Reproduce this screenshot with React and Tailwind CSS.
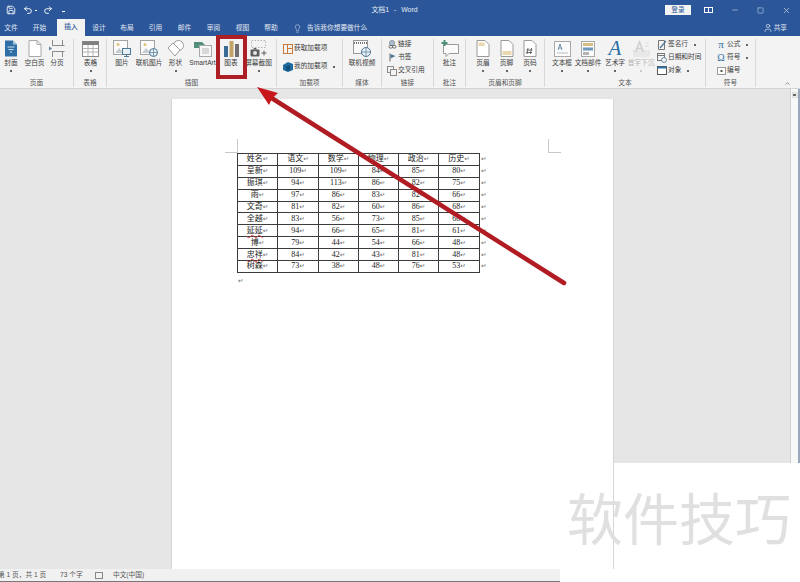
import { User, Lightbulb, Save, Undo2, Redo2, Minus, Square, X, ChevronUp } from "lucide-react";

const TABS = [
  ["文件", 22],
  ["开始", 35],
  ["插入", 28],
  ["设计", 28],
  ["布局", 28],
  ["引用", 29],
  ["邮件", 29],
  ["审阅", 29],
  ["视图", 29],
  ["帮助", 28],
];

const SCORES = [
  ["姓名", "语文", "数学", "物理", "政治", "历史"],
  ["呈新", "109", "109", "84", "85", "80"],
  ["振琪", "94", "113", "86", "82", "75"],
  ["雨", "97", "86", "83", "82", "66"],
  ["文奇", "81", "82", "60", "86", "68"],
  ["全越", "83", "56", "73", "85", "68"],
  ["延延", "94", "66", "65", "81", "61"],
  ["博", "79", "44", "54", "66", "48"],
  ["忠祥", "84", "42", "43", "81", "48"],
  ["树森", "73", "38", "48", "76", "53"],
];

const MISSPELLED = ["延延", "忠祥"];

function Glyph({ w = 20, h = 18, children }) {
  return (
    <svg width={w} height={h} viewBox={`0 0 ${w} ${h}`} fill="none">
      {children}
    </svg>
  );
}

const CoverIcon = () => (
  <Glyph w={14} h={17}>
    <path d="M1 0.5h8l4 4v12H1z" fill="#2f6fa6" />
    <path d="M9 0.5l4 4H9z" fill="#a9c6de" />
    <path d="M3.5 7h7M4.5 9.5h5M6 12h2" stroke="#cfe0ee" />
  </Glyph>
);

const BlankIcon = () => (
  <Glyph w={14} h={17}>
    <path d="M1 0.5h8l4 4v12H1z" fill="#fff" stroke="#a8a8a8" />
    <path d="M9 0.5v4h4" stroke="#a8a8a8" />
  </Glyph>
);

const BreakIcon = () => (
  <Glyph w={16} h={17}>
    <path d="M3.5 0v5.5h12M3.5 17v-5.5h12" stroke="#8a8a8a" />
    <path d="M13.5 0v5M13.5 17v-5" stroke="#8a8a8a" />
    <path d="M0 6.5l3 2-3 2z" fill="#5c7f9f" />
  </Glyph>
);

const TableIcon = () => (
  <Glyph w={17} h={16}>
    <rect x="0.5" y="0.5" width="16" height="15" fill="#fff" stroke="#8c8c8c" />
    <rect x="0.5" y="0.5" width="16" height="3.5" fill="#7f7f7f" />
    <path d="M6 4v11M11 4v11M1 7.5h15M1 11h15" stroke="#b5b5b5" />
  </Glyph>
);

const PictureIcon = ({ badge }) => (
  <Glyph w={18} h={17}>
    <rect x="0.5" y="0.5" width="14" height="14" fill="#fbfbfb" stroke="#a3a3a3" />
    <path d="M2 13l4-5 3 3 2-2 3 4z" fill="#c8cdd2" />
    <circle cx="5" cy="4.5" r="1.5" fill="#e2c27c" />
    {badge === "monitor" ? (
      <>
        <rect x="9.5" y="8.5" width="8" height="6" fill="#e8f0f6" stroke="#4f7897" />
        <path d="M11 16.5h5M13.5 14.5v2" stroke="#4f7897" />
      </>
    ) : (
      <>
        <circle cx="13.5" cy="12.5" r="4" fill="#e8f0f6" stroke="#4f7897" />
        <path d="M9.5 12.5h8M13.5 8.5v8" stroke="#4f7897" strokeWidth="0.7" />
      </>
    )}
  </Glyph>
);

const ShapesIcon = () => (
  <Glyph w={17} h={17}>
    <circle cx="11.5" cy="5.5" r="5" fill="#fff" stroke="#9a9a9a" />
    <path d="M1 8l5-5 7 7-5 6z" fill="#fff" stroke="#9a9a9a" />
  </Glyph>
);

const SmartArtIcon = () => (
  <Glyph w={18} h={16}>
    <path d="M0 1h8l3 3-3 3H0z" fill="#4f8f7b" />
    <rect x="5.5" y="4.5" width="12" height="11" fill="#f7f7f7" stroke="#a8a8a8" />
    <rect x="8" y="7" width="7" height="6" fill="#d8d8d8" />
  </Glyph>
);

const ChartIcon = () => (
  <Glyph w={15} h={16}>
    <rect x="0" y="5" width="4" height="11" fill="#3b6a94" />
    <rect x="5.5" y="0" width="4" height="16" fill="#c2a566" />
    <rect x="11" y="3" width="4" height="13" fill="#6f6f6f" />
  </Glyph>
);

const ScreenshotIcon = () => (
  <Glyph w={17} h={17}>
    <rect x="1.5" y="0.5" width="14" height="7" stroke="#b5b5b5" strokeDasharray="1.5 1.5" />
    <rect x="0.5" y="9.5" width="9" height="7" rx="1" fill="#5f5f5f" />
    <path d="M3 9.5l1-1.5h2l1 1.5z" fill="#5f5f5f" />
    <circle cx="5" cy="13" r="2" fill="#e6e6e6" />
    <path d="M11.5 13h5M14 10.5v5" stroke="#5f5f5f" />
  </Glyph>
);

const StoreIcon = () => (
  <Glyph w={10} h={10}>
    <rect x="0.5" y="0.5" width="4" height="9" stroke="#c77a3c" />
    <rect x="4.5" y="0.5" width="5" height="4" stroke="#c77a3c" />
    <rect x="4.5" y="4.5" width="5" height="5" stroke="#c77a3c" />
  </Glyph>
);

const MyAddinIcon = () => (
  <Glyph w={10} h={10}>
    <path d="M0 3l5-3 5 2v6l-5 2-5-2z" fill="#1f6b9f" />
    <path d="M3 4l4-1v5l-4 1z" fill="#0f4f7b" />
  </Glyph>
);

const VideoIcon = () => (
  <Glyph w={18} h={17}>
    <rect x="0.5" y="0.5" width="14" height="13" fill="#fafafa" stroke="#999" />
    <path d="M1 3h13" stroke="#777" strokeDasharray="1 1" strokeWidth="2" />
    <circle cx="13" cy="12" r="4.5" fill="#e8f0f6" stroke="#4f7897" />
    <path d="M8.5 12h9M13 7.5v9" stroke="#4f7897" strokeWidth="0.7" />
  </Glyph>
);

const LinkIcon = () => (
  <Glyph w={9} h={9}>
    <circle cx="4" cy="3" r="2.6" fill="#a7bfd4" stroke="#7f7f7f" strokeWidth="0.7" />
    <rect x="1" y="5.5" width="3.5" height="2.5" rx="1" stroke="#555" strokeWidth="0.8" />
    <rect x="4.5" y="5.5" width="3.5" height="2.5" rx="1" stroke="#555" strokeWidth="0.8" />
  </Glyph>
);

const FlagIcon = () => (
  <Glyph w={9} h={9}>
    <path d="M2 0.5v8" stroke="#666" />
    <path d="M2.5 1l5 2-5 2.5z" fill="#4f7897" />
  </Glyph>
);

const CrossRefIcon = () => (
  <Glyph w={10} h={10}>
    <rect x="0.5" y="0.5" width="6" height="6" stroke="#8a8a8a" />
    <rect x="3.5" y="3.5" width="6" height="6" fill="#f3f3f3" stroke="#8a8a8a" />
  </Glyph>
);

const CommentIcon = () => (
  <Glyph w={18} h={17}>
    <path d="M2.5 4.5h15v9H8l-3 3v-3H2.5z" fill="#fafafa" stroke="#9a9a9a" />
    <path d="M3.5 0v6M0.5 3h6" stroke="#4f8f7b" strokeWidth="2" />
  </Glyph>
);

const HeaderIcon = ({ kind }) => (
  <Glyph w={14} h={17}>
    <path d="M1 0.5h8l4 4v12H1z" fill="#fff" stroke="#9a9a9a" />
    {kind === "header" && <rect x="2.5" y="2.5" width="6" height="3.5" fill="#ead9ac" />}
    {kind === "footer" && <rect x="2.5" y="11" width="9" height="4" fill="#ead9ac" />}
    {kind === "number" && <path d="M5 8l-1 6M8.5 8l-1 6M3.5 10h6M3 12.5h6" stroke="#666" />}
  </Glyph>
);

const TextBoxIcon = () => (
  <Glyph w={17} h={16}>
    <rect x="0.5" y="0.5" width="16" height="15" fill="#fbfbfb" stroke="#a8a8a8" />
    <path d="M4 9l2-6 2 6M4.7 7h2.6" stroke="#4f7897" strokeWidth="0.8" />
    <path d="M3 12h11" stroke="#bdbdbd" />
  </Glyph>
);

const QuickPartsIcon = () => (
  <Glyph w={14} h={16}>
    <rect x="0.5" y="0.5" width="13" height="15" fill="#fbfbfb" stroke="#a8a8a8" />
    <rect x="2" y="2" width="10" height="3" fill="#d5bd83" />
    <rect x="2" y="6.5" width="10" height="3" fill="#6f9aba" />
    <rect x="2" y="11" width="6" height="3" fill="#b4b4b4" />
  </Glyph>
);

const DropCapIcon = () => (
  <Glyph w={17} h={17}>
    <rect x="0" y="10" width="17" height="7" fill="#e8e8e8" />
    <path d="M2.5 12l4-10 4 10M4.2 8.5h4.6" stroke="#cfcfcf" strokeWidth="1.6" />
    <path d="M12 3h4M12 6h4" stroke="#dcdcdc" />
  </Glyph>
);

const SignatureIcon = () => (
  <Glyph w={9} h={10}>
    <path d="M0.5 0.5h6v9h-6z" stroke="#777" />
    <path d="M2 8l6-7" stroke="#4f7897" strokeWidth="1.2" />
  </Glyph>
);

const DateIcon = () => (
  <Glyph w={10} h={10}>
    <rect x="0.5" y="0.5" width="7" height="7" stroke="#777" />
    <path d="M0.5 2.5h7" stroke="#777" />
    <circle cx="7" cy="7" r="2.5" fill="#f3f3f3" stroke="#4f7897" strokeWidth="0.8" />
  </Glyph>
);

const ObjectIcon = () => (
  <Glyph w={10} h={9}>
    <rect x="0.5" y="0.5" width="9" height="8" fill="#fff" stroke="#555" />
    <path d="M0.5 1.5h9" stroke="#2f6fa6" strokeWidth="2" />
  </Glyph>
);

const NumberIcon = () => (
  <Glyph w={9} h={8}>
    <rect x="0.5" y="0.5" width="8" height="7" fill="#fff" stroke="#9a9a9a" />
    <rect x="3.5" y="3" width="2" height="2" fill="#555" />
  </Glyph>
);

function Dot({ faint }) {
  return <span className={`block w-[2px] h-[2px] ${faint ? "bg-[#c8c8c8]" : "bg-[#666]"}`} />;
}

function LargeButton({ width, label, dropdown, disabled, children }) {
  return (
    <div className="flex flex-col items-center shrink-0" style={{ width }}>
      <div className="h-[17px] mt-[1px] flex items-center justify-center">{children}</div>
      <span
        className={`mt-[1px] h-[10px] leading-[10px] whitespace-nowrap ${disabled ? "text-[#b4b4b4]" : "text-[#3c3c3c]"}`}
      >
        {label}
      </span>
      {dropdown && (
        <span className="mt-[2px]">
          <Dot faint={disabled} />
        </span>
      )}
    </div>
  );
}

function SmallButton({ icon, label, dropdown }) {
  return (
    <div className="flex items-center h-[13px] whitespace-nowrap text-[#3c3c3c]">
      <span className="w-[10px] flex justify-center shrink-0">{icon}</span>
      <span className="ml-[1px]">{label}</span>
      {dropdown && (
        <span className="ml-[6px]">
          <Dot />
        </span>
      )}
    </div>
  );
}

function RibbonGroup({ width, title, pad = 0, children }) {
  return (
    <div
      className="flex flex-col shrink-0 border-r border-[#d8d8d8] h-[48px] mt-[3px]"
      style={{ width, paddingLeft: pad }}
    >
      <div className="flex-1 flex items-start min-h-0">{children}</div>
      <div className="h-[10px] leading-[12px] text-center text-[#555]" style={{ marginLeft: -pad }}>
        {title}
      </div>
    </div>
  );
}

function TitleBar() {
  return (
    <div className="h-[20px] bg-[#2b579a] flex items-center text-white">
      <div className="flex items-center w-[70px] pl-[6px]">
        <Save size={10} strokeWidth={2} />
        <Undo2 size={10} strokeWidth={2.2} className="ml-[7px]" />
        <span className="w-[2px] h-[1px] bg-white ml-[2px]" />
        <Redo2 size={10} strokeWidth={2.2} className="ml-[6px]" />
        <span className="w-[3px] h-[3px] border-b border-white ml-[9px]" />
      </div>
      <div className="w-[595px] text-center text-[6.9px] text-[#e6ecf5] pl-[54px] [word-spacing:3px]">文档1 - Word</div>
      <span className="w-[26px] h-[10px] bg-[#f4f4f4] text-[#2b579a] text-[6.7px] leading-[10px] text-center">登录</span>
      <span className="w-[9px] h-[6px] border border-white ml-[13px] flex justify-center">
        <span className="w-[1px] h-full bg-white" />
      </span>
      <Minus size={8} className="ml-[18px]" strokeWidth={1.4} />
      <Square size={7} className="ml-[18px]" strokeWidth={1.4} />
      <X size={9} className="ml-[18px]" strokeWidth={1.4} />
    </div>
  );
}

function TabRow() {
  return (
    <div className="h-[16px] bg-[#2b579a] flex items-stretch text-[6.7px] text-[#e2e8f2]">
      {TABS.map(([name, width]) => (
        <div
          key={name}
          style={{ width }}
          className={`flex items-center justify-center ${
            name === "插入" ? "bg-[#f3f3f3] text-[#2b579a] font-medium mt-[-1px]" : ""
          }`}
        >
          {name}
        </div>
      ))}
      <div className="flex items-center ml-[8px]">
        <Lightbulb size={9} strokeWidth={1.4} />
        <span className="ml-[5px]">告诉我你想要做什么</span>
      </div>
      <div className="flex items-center ml-auto mr-[13px]">
        <User size={10} strokeWidth={1.6} />
        <span className="ml-[1px]">共享</span>
      </div>
    </div>
  );
}

function Ribbon() {
  return (
    <div className="h-[53px] bg-[#f3f3f3] border-b border-[#d4d4d4] flex items-start text-[6.7px] relative">
      <RibbonGroup width={74} title="页面">
        <LargeButton width={22} label="封面" dropdown><CoverIcon /></LargeButton>
        <LargeButton width={25} label="空白页"><BlankIcon /></LargeButton>
        <LargeButton width={20} label="分页"><BreakIcon /></LargeButton>
      </RibbonGroup>
      <RibbonGroup width={33} title="表格" pad={1}>
        <LargeButton width={31} label="表格" dropdown><TableIcon /></LargeButton>
      </RibbonGroup>
      <RibbonGroup width={170} title="插图" pad={1}>
        <LargeButton width={28} label="图片"><PictureIcon badge="monitor" /></LargeButton>
        <LargeButton width={26} label="联机图片"><PictureIcon badge="globe" /></LargeButton>
        <LargeButton width={27} label="形状" dropdown><ShapesIcon /></LargeButton>
        <LargeButton width={27} label="SmartArt"><SmartArtIcon /></LargeButton>
        <LargeButton width={30} label="图表"><ChartIcon /></LargeButton>
        <LargeButton width={25} label="屏幕截图" dropdown><ScreenshotIcon /></LargeButton>
      </RibbonGroup>
      <RibbonGroup width={66} title="加载项" pad={6}>
        <div className="flex flex-col pt-[3px] gap-[5px]">
          <SmallButton icon={<StoreIcon />} label="获取加载项" />
          <SmallButton icon={<MyAddinIcon />} label="我的加载项" dropdown />
        </div>
      </RibbonGroup>
      <RibbonGroup width={39} title="媒体">
        <LargeButton width={38} label="联机视频"><VideoIcon /></LargeButton>
      </RibbonGroup>
      <RibbonGroup width={52} title="链接" pad={5}>
        <div className="flex flex-col mt-[-1px]">
          <SmallButton icon={<LinkIcon />} label="链接" />
          <SmallButton icon={<FlagIcon />} label="书签" />
          <SmallButton icon={<CrossRefIcon />} label="交叉引用" />
        </div>
      </RibbonGroup>
      <RibbonGroup width={32} title="批注">
        <LargeButton width={31} label="批注"><CommentIcon /></LargeButton>
      </RibbonGroup>
      <RibbonGroup width={79} title="页眉和页脚" pad={5}>
        <LargeButton width={24} label="页眉" dropdown><HeaderIcon kind="header" /></LargeButton>
        <LargeButton width={23} label="页脚" dropdown><HeaderIcon kind="footer" /></LargeButton>
        <LargeButton width={24} label="页码" dropdown><HeaderIcon kind="number" /></LargeButton>
      </RibbonGroup>
      <RibbonGroup width={161} title="文本" pad={5}>
        <LargeButton width={24} label="文本框" dropdown><TextBoxIcon /></LargeButton>
        <LargeButton width={28} label="文档部件" dropdown><QuickPartsIcon /></LargeButton>
        <LargeButton width={26} label="艺术字" dropdown>
          <span className="font-['Liberation_Serif',serif] italic text-[21px] leading-[17px] text-[#2f6fa6]">A</span>
        </LargeButton>
        <LargeButton width={26} label="首字下沉" dropdown disabled><DropCapIcon /></LargeButton>
        <div className="flex flex-col ml-[3px] mt-[-1px]">
          <SmallButton icon={<SignatureIcon />} label="签名行" dropdown />
          <SmallButton icon={<DateIcon />} label="日期和时间" />
          <SmallButton icon={<ObjectIcon />} label="对象" dropdown />
        </div>
      </RibbonGroup>
      <RibbonGroup width={50} title="符号" pad={10}>
        <div className="flex flex-col mt-[-1px]">
          <SmallButton
            icon={<span className="font-['Liberation_Serif',serif] text-[11px] leading-[11px] text-[#2f6fa6]">π</span>}
            label="公式"
            dropdown
          />
          <SmallButton
            icon={<span className="font-['Liberation_Serif',serif] text-[10px] leading-[11px] text-[#2f6fa6]">Ω</span>}
            label="符号"
            dropdown
          />
          <SmallButton icon={<NumberIcon />} label="编号" />
        </div>
      </RibbonGroup>
      <ChevronUp size={7} strokeWidth={2} className="absolute right-[9px] bottom-[1px] text-[#555]" />
    </div>
  );
}

function ParaMark() {
  return <span className="font-['DejaVu_Sans',sans-serif] text-[6.5px] leading-[6px] text-[#666]">↵</span>;
}

function ScoreTable() {
  return (
    <table className="table-fixed border-collapse w-[252px] text-[8px] text-[#222]">
      <colgroup>
        {[40, 41, 40, 40, 40, 41].map((width, i) => (
          <col key={i} style={{ width }} />
        ))}
        <col />
      </colgroup>
      <tbody>
        {SCORES.map((row) => (
          <tr key={row[0]} className="h-[11.9px]">
            {row.map((value, i) => (
              <td key={i} className="border border-[#3c3c3c] p-0 text-center leading-[10px] h-[11.9px] whitespace-nowrap">
                <span className={MISSPELLED.includes(value) ? "underline decoration-wavy decoration-[#d04040] decoration-[0.5px]" : ""}>
                  {value}
                </span>
                <ParaMark />
              </td>
            ))}
            <td className="p-0 pl-[1px] leading-[10px]">
              <ParaMark />
            </td>
          </tr>
        ))}
      </tbody>
    </table>
  );
}

function Page() {
  return (
    <div className="relative flex-1 bg-white border-r border-l border-[#d6d6d6] pl-[65px] pt-[54px] font-['Liberation_Serif','Noto_Sans_CJK_SC',serif]">
      {/* margin crop marks */}
      <span className="absolute left-[65px] top-[40px] w-[1px] h-[14px] bg-[#c8c8c8]" />
      <span className="absolute left-[53px] top-[53px] w-[12px] h-[1px] bg-[#c8c8c8]" />
      <span className="absolute left-[376px] top-[40px] w-[1px] h-[14px] bg-[#c8c8c8]" />
      <span className="absolute left-[376px] top-[53px] w-[13px] h-[1px] bg-[#c8c8c8]" />
      <ScoreTable />
      <div className="h-[10px] leading-[10px] pl-[1px]">
        <ParaMark />
      </div>
    </div>
  );
}

function Workspace() {
  return (
    <div className="flex-1 flex min-h-0">
      <div className="w-[171px] bg-[#e6e6e6]" />
      <div className="w-[443px] bg-[#e6e6e6] pt-[10px] flex flex-col">
        <Page />
      </div>
      <div className="flex-1 flex flex-col">
        <div className="h-[374px] flex bg-[#e6e6e6]">
          <div className="flex-1" />
          <div className="w-[10px] bg-[#f8f8f8] border-l border-[#cfcfcf] border-r-2 border-r-[#9aa8bd] pt-[3px] flex justify-center">
            <span className="w-[6px] h-[6px] bg-[#eee] border border-[#ddd] flex items-center justify-center">
              <span className="w-[3px] h-[2px] bg-[#666]" />
            </span>
          </div>
        </div>
        <div className="flex-1 bg-white" />
      </div>
    </div>
  );
}

function StatusBar() {
  return (
    <div className="h-[13px] flex bg-white text-[6.7px] text-[#555]">
      <div className="w-[560px] bg-[#f1f1f1] border-b border-[#777] flex items-center whitespace-nowrap">
        <span className="ml-[-2px] w-[62px]">第 1 页，共 1 页</span>
        <span className="w-[35px]">73 个字</span>
        <span className="w-[18px] flex">
          <span className="w-[8px] h-[7px] border border-[#888]" />
        </span>
        <span>中文(中国)</span>
      </div>
    </div>
  );
}

export default function App() {
  return (
    <div className="relative w-[800px] h-[582px] overflow-hidden flex flex-col font-['Liberation_Sans','Noto_Sans_CJK_SC',sans-serif]">
      <TitleBar />
      <TabRow />
      <Ribbon />
      <Workspace />
      <StatusBar />

      {/* callout around the chart button and the arrow pointing at it */}
      <div className="absolute left-[216px] top-[35px] w-[31px] h-[44px] border-[4px] border-[#ab1f25]" />
      <svg className="absolute inset-0 pointer-events-none" width="800" height="582" viewBox="0 0 800 582" fill="none">
        <path d="M564 283L270 97" stroke="#b01c22" strokeWidth="4.5" strokeLinecap="round" />
        <path d="M257 87L278 93L272 98.500L269 105Z" fill="#c8161d" />
      </svg>

      <div className="absolute left-[567px] top-[487px] text-[56px] leading-[68px] text-[#e0e0e0] whitespace-nowrap">
        软件技巧
      </div>
    </div>
  );
}
